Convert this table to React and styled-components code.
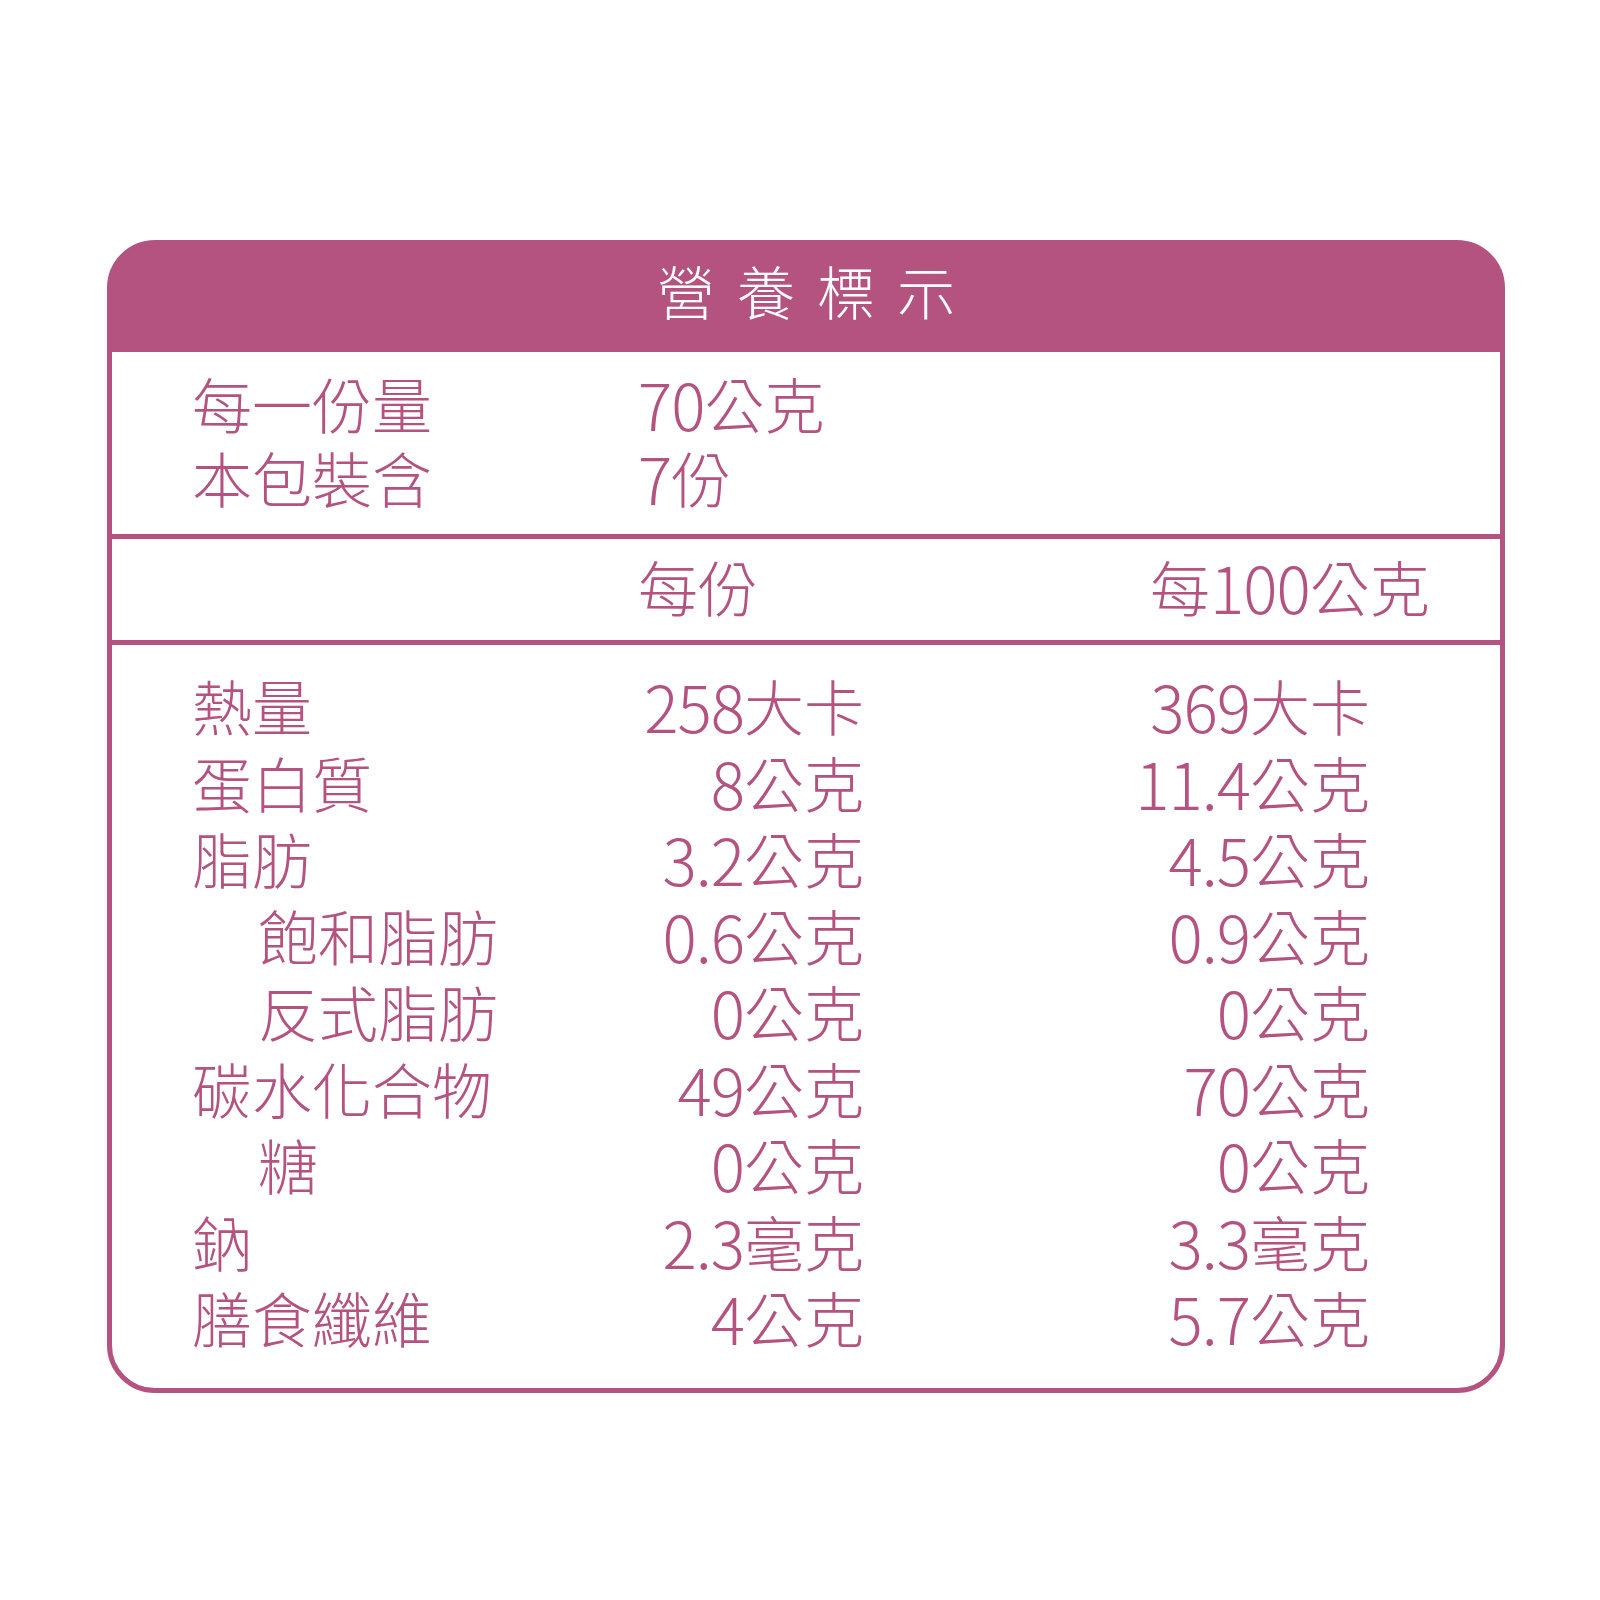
import React from 'react';
import styled, { createGlobalStyle } from 'styled-components';

//***Colors***/
const pink = '#B45280';
const white = '#fff';

const GlobalStyle = createGlobalStyle`
  html, body {
    margin: 0;
    padding: 0;
    background: ${white};
  }
  body {
    font-family: 'Noto Sans CJK TC', 'Noto Sans CJK SC', sans-serif;
  }
`;

//***Layout***/
const Page = styled.div`
    width: 1600px;
    min-height: 1600px;
    padding: 240px 0 0 107px;
    box-sizing: border-box;
`;

// the pink band behind the header keeps the rounded corners free of seams
const Card = styled.div`
    width: 1398px;
    height: 1153px;
    box-sizing: border-box;
    border: 5px solid ${pink};
    border-radius: 48px;
    overflow: hidden;
    display: flex;
    flex-direction: column;
    background: linear-gradient(${pink} 0 112px, ${white} 112px) border-box;
    color: ${pink};
    font-weight: 300;
`;

const Header = styled.div`
    height: 107px;
    box-sizing: border-box;
    padding-bottom: 18px;
    background-color: ${pink};
    display: flex;
    align-items: center;
    justify-content: center;
`;

const Title = styled.h1`
    margin: 0;
    color: ${white};
    font-size: 58px;
    font-weight: 300;
    line-height: 1;
    letter-spacing: 22px;
    padding-left: 22px;
`;

const Section = styled.div`
    padding: ${p => p.$pad};
    border-bottom: ${p => (p.$divider ? `5px solid ${pink}` : 'none')};
    flex: ${p => (p.$grow ? 1 : 'none')};
`;

const Row = styled.div`
    display: grid;
    grid-template-columns: [name] 446px [v1] 226px 206px [v2] 300px;
    font-size: 60px;
    line-height: ${p => p.$lh}px;
`;

const Name = styled.div`
    grid-column: name;
    padding-left: ${p => (p.$sub ? 66 : 0)}px;
    white-space: nowrap;
`;

const Value = styled.div`
    grid-column: ${p => p.$col};
    text-align: ${p => p.$align || 'right'};
    padding-left: ${p => p.$inset || 0}px;
    white-space: nowrap;
`;

const Num = styled.span`
    font-size: 64px;
    letter-spacing: -1px;
    vertical-align: -2px;
`;

// splits "11.4公克" into the number and the unit
const Amount = ({ text }) => {
    const m = text.match(/^([\d.]+)(.*)$/);
    if (!m) return text;
    return (
        <>
            <Num>{m[1]}</Num>
            {m[2]}
        </>
    );
};

const serving = [
    ['每一份量', '70公克'],
    ['本包裝含', '7份'],
];

const nutrients = [
    { name: '熱量', a: '258大卡', b: '369大卡' },
    { name: '蛋白質', a: '8公克', b: '11.4公克' },
    { name: '脂肪', a: '3.2公克', b: '4.5公克' },
    { name: '飽和脂肪', a: '0.6公克', b: '0.9公克', sub: true },
    { name: '反式脂肪', a: '0公克', b: '0公克', sub: true },
    { name: '碳水化合物', a: '49公克', b: '70公克' },
    { name: '糖', a: '0公克', b: '0公克', sub: true },
    { name: '鈉', a: '2.3毫克', b: '3.3毫克' },
    { name: '膳食纖維', a: '4公克', b: '5.7公克' },
];

export default function App() {
    return (
        <>
            <GlobalStyle />
            <Page>
                <Card>
                    <Header>
                        <Title>營養標示</Title>
                    </Header>

                    <Section $pad="14px 0 20px 80px" $divider>
                        {serving.map(([label, value]) => (
                            <Row key={label} $lh={74}>
                                <Name>{label}</Name>
                                <Value $col="v1" $align="left">
                                    <Amount text={value} />
                                </Value>
                            </Row>
                        ))}
                    </Section>

                    <Section $pad="0 0 7px 80px" $divider>
                        <Row $lh={93}>
                            <Value $col="v1" $align="left">每份</Value>
                            <Value $col="v2" $align="left" $inset={80}>
                                每<Num>100</Num>公克
                            </Value>
                        </Row>
                    </Section>

                    <Section $pad="22px 0 0 80px" $grow>
                        {nutrients.map(n => (
                            <Row key={n.name} $lh={76.5}>
                                <Name $sub={n.sub}>{n.name}</Name>
                                <Value $col="v1"><Amount text={n.a} /></Value>
                                <Value $col="v2"><Amount text={n.b} /></Value>
                            </Row>
                        ))}
                    </Section>
                </Card>
            </Page>
        </>
    );
}
